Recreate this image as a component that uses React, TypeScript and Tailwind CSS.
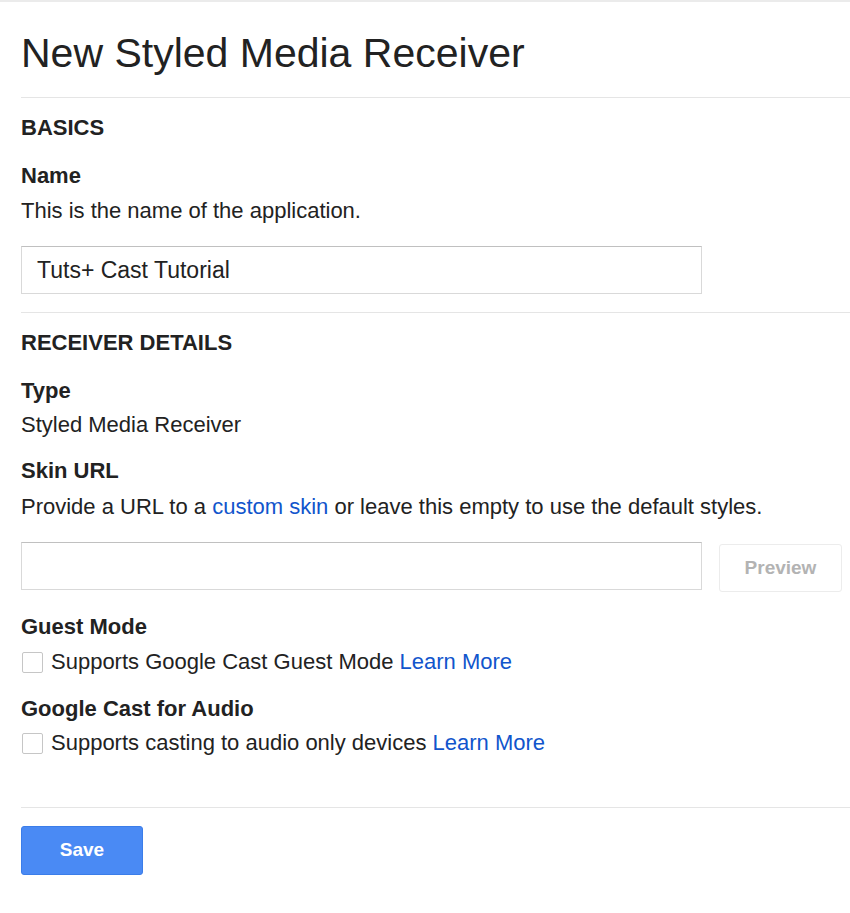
const font = { fontFamily: '"Liberation Sans", Arial, Helvetica, sans-serif' };

function Label({ children, className = "" }: { children: React.ReactNode; className?: string }) {
  return <div className={`text-[22px] leading-[24px] font-bold text-[#222] ${className}`}>{children}</div>;
}

function Text({ children, className = "" }: { children: React.ReactNode; className?: string }) {
  return <div className={`text-[22px] leading-[24px] text-[#222] ${className}`}>{children}</div>;
}

function Check({ children, className = "" }: { children: React.ReactNode; className?: string }) {
  return (
    <label className={`flex items-center gap-[8px] text-[22px] leading-[24px] text-[#222] ${className}`}>
      <span className="ml-[1px] w-[21px] h-[21px] rounded-[2px] border border-[#c6c6c6] bg-white shrink-0" />
      <span>{children}</span>
    </label>
  );
}

export default function App() {
  return (
    <div className="min-h-[913px] bg-white border-t-2 border-[#ebebeb]" style={font}>
      <div className="pl-[21px]">
        <h1 className="mt-[27px] text-[41px] leading-[48px] font-normal text-[#222]">
          New Styled Media Receiver
        </h1>
        <div className="mt-[20px] h-px bg-[#e5e5e5]" />

        {/* Basics */}
        <Label className="mt-[18px]">BASICS</Label>
        <Label className="mt-[24px]">Name</Label>
        <Text className="mt-[11px]">This is the name of the application.</Text>
        <div className="mt-[23px] w-[681px] h-[48px] border border-[#d9d9d9] border-t-[#c0c0c0] flex items-center px-[15px] text-[23px] text-[#222]">
          Tuts+ Cast Tutorial
        </div>
        <div className="mt-[18px] h-px bg-[#e5e5e5]" />

        {/* Receiver details */}
        <Label className="mt-[18px]">RECEIVER DETAILS</Label>
        <Label className="mt-[24px]">Type</Label>
        <Text className="mt-[10px]">Styled Media Receiver</Text>
        <Label className="mt-[22px]">Skin URL</Label>
        <Text className="mt-[12px]">
          Provide a URL to a <a className="text-[#1155cc]">custom skin</a> or leave this empty to use the default styles.
        </Text>
        <div className="mt-[23px] h-[48px] flex items-start gap-[17px]">
          <div className="w-[681px] h-[48px] border border-[#d9d9d9] border-t-[#c0c0c0] bg-white shrink-0" />
          <button className="mt-[2px] w-[123px] h-[48px] shrink-0 rounded-[3px] border border-[#ececec] bg-white text-[19px] font-bold text-[#b3b3b3]">
            Preview
          </button>
        </div>

        <Label className="mt-[25px]">Guest Mode</Label>
        <Check className="mt-[11px]">
          Supports Google Cast Guest Mode <a className="text-[#1155cc]">Learn More</a>
        </Check>
        <Label className="mt-[23px]">Google Cast for Audio</Label>
        <Check className="mt-[10px]">
          Supports casting to audio only devices <a className="text-[#1155cc]">Learn More</a>
        </Check>
        <div className="mt-[52px] h-px bg-[#e5e5e5]" />

        <button className="mt-[18px] w-[122px] h-[49px] rounded-[3px] border border-[#3b7de9] bg-[#4a8af4] text-white text-[19px] font-bold">
          Save
        </button>
      </div>
    </div>
  );
}
